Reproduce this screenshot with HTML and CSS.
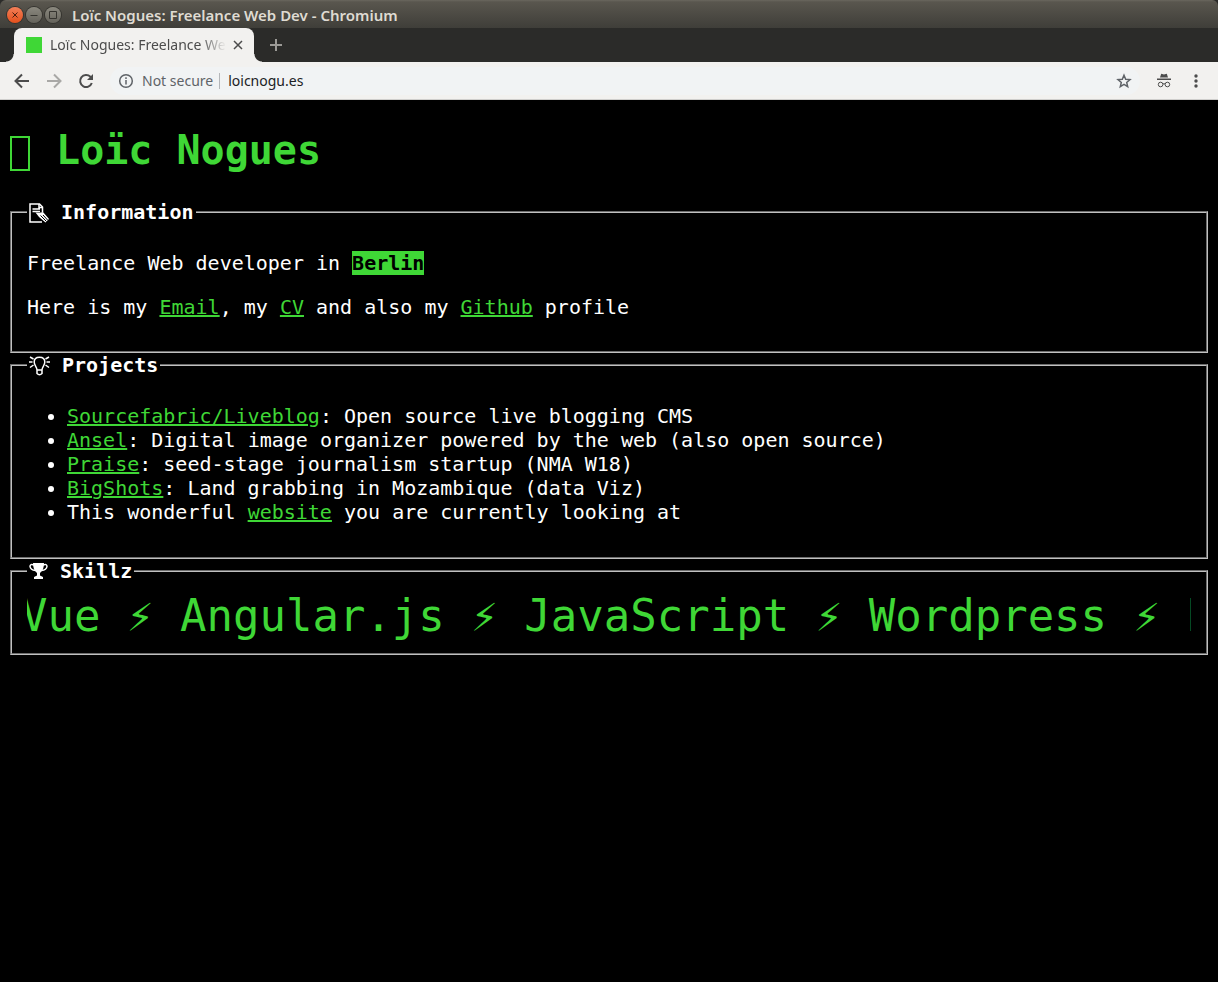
FILE: index.html
```
<!DOCTYPE html>
<html lang="en">
<head>
<meta charset="utf-8">
<title>Loïc Nogues: Freelance Web Dev</title>
<link rel="stylesheet" href="styles.css">
</head>
<body>
<header class="chrome">
  <div class="titlebar">
    <button class="win win-close" aria-label="Close window"><svg viewBox="0 0 16 16"><path d="M5.5 5.5l5 5M10.5 5.5l-5 5"/></svg></button>
    <button class="win" aria-label="Minimize"><svg viewBox="0 0 16 16"><path d="M4.500 8.500h7"/></svg></button>
    <button class="win" aria-label="Maximize"><svg viewBox="0 0 16 16"><path d="M4.500 4.500h7v7h-7z"/></svg></button>
    <span class="window-title">Loïc Nogues: Freelance Web Dev - Chromium</span>
  </div>
  <div class="tabs">
    <div class="tab">
      <span class="favicon"></span>
      <span class="tab-title">Loïc Nogues: Freelance Web Dev</span>
      <button class="tab-close" aria-label="Close tab"><svg viewBox="0 0 10 10"><path d="M1 1l8 8M9 1l-8 8"/></svg></button>
    </div>
    <button class="new-tab" aria-label="New tab"><svg viewBox="0 0 12 12"><path d="M6 0v12M0 6h12"/></svg></button>
  </div>
  <div class="toolbar">
    <button class="tool" aria-label="Back"><svg viewBox="0 0 16 16"><path d="M15 8H2M8 1.500L1.500 8L8 14.500"/></svg></button>
    <button class="tool tool-off" aria-label="Forward" disabled><svg viewBox="0 0 16 16"><path d="M1 8h13M8 1.500L14.500 8L8 14.500"/></svg></button>
    <button class="tool" aria-label="Reload"><svg viewBox="0 0 16 16"><path d="M13.800 10A6 6 0 1 1 12.400 3.800L14 5.400"/><path class="solid" d="M15 1v6H9z"/></svg></button>
    <div class="omnibox">
      <svg class="info" viewBox="0 0 16 16"><circle cx="8" cy="8" r="6.300"/><path d="M8 7v4.500M8 4.300v1.700"/></svg>
      <label class="secure" for="url">Not secure</label>
      <input class="url" id="url" type="text" value="loicnogu.es">
      <button class="star" aria-label="Bookmark"><svg viewBox="0 0 16 16"><path d="M8 2.200l1.700 4 4.300.4-3.300 2.800 1 4.200L8 11.400l-3.700 2.200 1-4.200L2 6.600l4.300-.4z"/></svg></button>
    </div>
    <button class="tool incognito" aria-label="Incognito"><svg viewBox="0 0 16 16"><path class="solid" d="M4 4.500L5.200.8L8 1.600l2.800-.8L12 4.500zM1 5.500h14v1.500H1z"/><circle cx="4.600" cy="11.500" r="2.300"/><circle cx="11.400" cy="11.500" r="2.300"/><path d="M7 11q1-.6 2 0"/></svg></button>
    <button class="tool" aria-label="Menu"><svg viewBox="0 0 16 16"><circle class="solid" cx="8" cy="3" r="1.700"/><circle class="solid" cx="8" cy="8" r="1.700"/><circle class="solid" cx="8" cy="13" r="1.700"/></svg></button>
  </div>
</header>
<main class="page">
  <h1 class="name"><span class="glyph"></span> Loïc Nogues</h1>
  <fieldset class="box">
    <legend class="legend"><svg class="icon icon-note" viewBox="0 0 20 20"><path d="M13 19H1V1h9.500L13.500 4v5"/><path d="M10 1v3.500h3.500M3.500 6H11M3.500 8.500H11"/><path class="solid" d="M6.500 9.500l4 .2 3.500-.7L20 16l-3.500 3.500L10 14z"/><path class="thin" d="M11.500 12.500l6 6M14 12l5 5.500"/></svg> Information</legend>
    <p>Freelance Web developer in <strong class="city">Berlin</strong></p>
    <p>Here is my <a href="#email">Email</a>, my <a href="#cv">CV</a> and also my <a href="#github">Github</a> profile</p>
  </fieldset>
  <fieldset class="box box-list">
    <legend class="legend"><svg class="icon icon-bulb" viewBox="0 0 21 20"><path d="M8 14C8 11 5.200 9.500 5.200 6C5.200 3 7.500 1.200 10.500 1.200S15.800 3 15.800 6C15.800 9.500 13 11 13 14zM8 14v3.500q2.500 2.500 5 0V14"/><path d="M1 1l3.500 2M0 6h3.500M1 11.500l3.500-2.500M20 1l-3.500 2M21 6h-3.500M20 11.500l-3.500-2.500"/></svg> Projects</legend>
    <ul>
      <li><a href="#liveblog">Sourcefabric/Liveblog</a>: Open source live blogging CMS</li>
      <li><a href="#ansel">Ansel</a>: Digital image organizer powered by the web (also open source)</li>
      <li><a href="#praise">Praise</a>: seed-stage journalism startup (NMA W18)</li>
      <li><a href="#bigshots">BigShots</a>: Land grabbing in Mozambique (data Viz)</li>
      <li>This wonderful <a href="#website">website</a> you are currently looking at</li>
    </ul>
  </fieldset>
  <fieldset class="box">
    <legend class="legend"><svg class="icon icon-cup" viewBox="0 0 19 20"><path class="solid" d="M4 1h11q0 7.500-4 10v2.500l3 1.500v2H5v-2l3-1.500V11Q4 8.500 4 1z"/><path d="M5 3Q1 1.500 1 4.500Q1.500 8 6.500 8.500M14 3q4-1.500 4 1.500q-.5 3.500-5.500 4"/></svg> Skillz</legend>
    <div class="ticker"><div class="ticker-text">Vue ⚡ Angular.js ⚡ JavaScript ⚡ Wordpress ⚡ PHP</div></div>
  </fieldset>
</main>
</body>
</html>
```
FILE: styles.css
```
* { box-sizing: border-box; }
body {
  margin: 0;
  background: #000;
  color: #fff;
  font: 20px/24px "DejaVu Sans Mono", monospace;
}
button {
  display: flex;
  align-items: center;
  justify-content: center;
  flex: none;
  padding: 0;
  border: 0;
  background: none;
  color: inherit;
}
svg { fill: none; stroke: currentColor; }
.solid { fill: currentColor; stroke: none; }

.chrome {
  font: 14px/20px "Noto Sans", sans-serif;
  background: #2b2b29;
}
.titlebar {
  display: flex;
  align-items: center;
  gap: 3px;
  height: 28px;
  padding: 1px 7px 0;
  background: linear-gradient(#6a675e 0, #59564e 2px, #3f3e39 100%);
  border-radius: 6px 6px 0 0;
}
.win {
  width: 16px;
  height: 16px;
  border-radius: 50%;
  background: linear-gradient(#8b897f, #65635b);
  box-shadow: 0 0 0 1px #35342f;
  color: #35342f;
}
.win svg { width: 16px; height: 16px; }
.win-close { background: linear-gradient(#f37f58, #e4501c); color: #4a2010; }
.window-title {
  margin-left: 8px;
  color: #dfdbd2;
  font-size: 15px;
  font-weight: 600;
}
.tabs {
  display: flex;
  height: 34px;
  padding-left: 14px;
}
.tab {
  position: relative;
  display: flex;
  align-items: center;
  width: 240px;
  padding: 0 11px 0 12px;
  border-radius: 8px 8px 0 0;
  background: #f2f1ef;
  color: #4c4c4c;
}
.tab::before,
.tab::after {
  content: "";
  position: absolute;
  bottom: 0;
  width: 8px;
  height: 8px;
}
.tab::before { right: 100%; background: radial-gradient(circle at 0 0, transparent 7px, #f2f1ef 8px); }
.tab::after { left: 100%; background: radial-gradient(circle at 100% 0, transparent 7px, #f2f1ef 8px); }
.favicon { flex: none; width: 16px; height: 16px; background: #3fd736; }
.tab-title {
  flex: 1;
  margin: 0 8px;
  overflow: hidden;
  white-space: nowrap;
  mask-image: linear-gradient(to right, #000 150px, transparent 176px);
}
.tab-close svg { width: 10px; height: 10px; stroke-width: 1.5; }
.new-tab { margin-left: 16px; color: #9b9a96; }
.new-tab svg { width: 12px; height: 12px; stroke-width: 2; }
.toolbar {
  display: flex;
  align-items: center;
  height: 38px;
  padding: 0 14px;
  gap: 16px;
  background: #f2f1ef;
  border-bottom: 1px solid #cfcecc;
  color: #4c4c4c;
}
.tool svg { display: block; width: 16px; height: 16px; stroke-width: 2; }
.tool-off { color: #a9a8a6; }
.tool.incognito svg { stroke-width: 1; }
.omnibox {
  display: flex;
  align-items: center;
  flex: 1;
  height: 28px;
  padding: 0 8px;
  border-radius: 14px;
  background: #f1f3f4;
  color: #5f6368;
}
.info { width: 16px; height: 16px; stroke-width: 1.5; }
.secure {
  margin-left: 8px;
  padding-right: 6px;
  border-right: 1px solid #b4b6b9;
  line-height: 16px;
}
.url {
  flex: 1;
  min-width: 0;
  padding: 0 8px;
  border: 0;
  outline: 0;
  background: none;
  color: #202124;
  font: inherit;
}
.star svg { width: 16px; height: 16px; stroke-width: 1.5; }

.page { padding: 27px 8px 8px; }
.name {
  margin: 0 0 26px;
  color: #3fd736;
  font-size: 40px;
  line-height: 47px;
}
.glyph {
  display: inline-block;
  width: 20px;
  height: 35px;
  margin: 0 2px;
  border: 2px solid currentColor;
  vertical-align: -7px;
}
.box {
  margin: 0 2px;
  padding: 7px 15px 12px;
  border: 2px groove #c0c0c0;
  min-width: 0;
}
.box-list { padding-bottom: 13px; }
.legend { padding: 0 2px; font-weight: 700; }
.icon {
  height: 20px;
  vertical-align: -4px;
  stroke-width: 1.5;
}
.icon-note { width: 20px; }
.icon-bulb { width: 21px; }
.icon-cup { width: 19px; }
.icon .thin { stroke: #000; stroke-width: 1; }
.box p { margin: 20px 0; }
.box ul { margin: 20px 0; padding-left: 40px; }
a { color: #3fd736; }
.city { background: #3fd736; color: #000; }
.ticker {
  overflow: hidden;
  white-space: nowrap;
  color: #3fd736;
  font-size: 44px;
  line-height: 51px;
}
.ticker-text { margin-left: -6px; }
```
